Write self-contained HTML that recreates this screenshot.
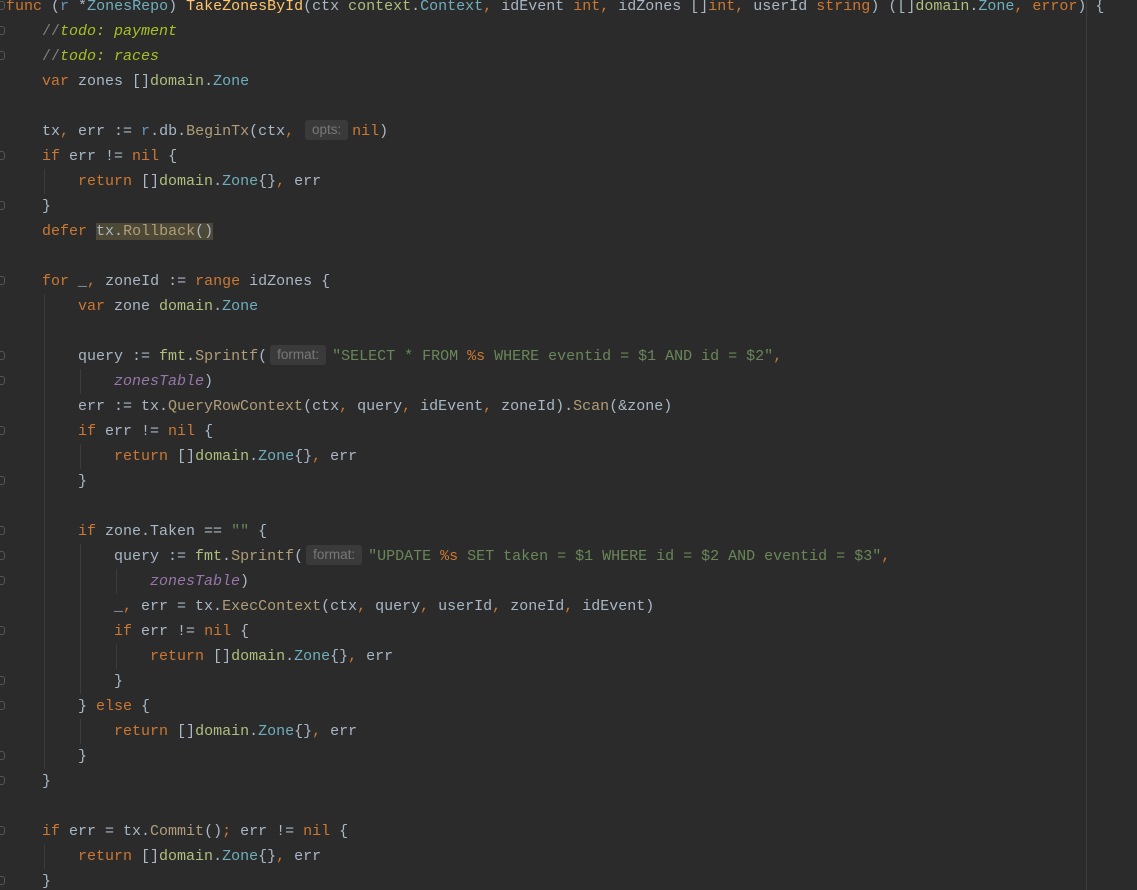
<!DOCTYPE html>
<html><head><meta charset="utf-8"><style>
html,body{margin:0;padding:0;background:#2b2b2b;width:1137px;height:890px;overflow:hidden;position:relative}
#code{position:absolute;left:6px;top:-6.5px;font-family:"Liberation Mono",monospace;font-size:15px;line-height:25px;color:#a9b7c6;white-space:pre}
.k{color:#cc7832}.f{color:#ffc66d}.m{color:#b09d79}.p{color:#afbf7e}.t{color:#6fafbd}.s{color:#6a8759}.c{color:#808080}
.td{color:#a8c023;font-style:italic}.v{color:#9876aa;font-style:italic}.r{color:#6897bb}
.h{display:inline-block;font-family:"Liberation Sans",sans-serif;font-size:13.5px;color:#787878;background:#3a3a3a;border-radius:3px;line-height:20px;text-align:center;vertical-align:1px}
.hl{background:#4d4936}
.g{position:absolute;width:1px;background:#3c3c3c}
.fi{position:absolute;left:0;width:4px;height:7px;border:1px solid #555;border-left:none;border-radius:0 3px 3px 0}
#edge{position:absolute;left:1086px;top:0;width:1px;height:890px;background:#3d3d3d}
</style></head><body>
<div id="edge"></div>
<div class="g" style="left:44px;top:169px;height:25px"></div>
<div class="g" style="left:44px;top:294px;height:475px"></div>
<div class="g" style="left:80px;top:369px;height:25px"></div>
<div class="g" style="left:80px;top:444px;height:25px"></div>
<div class="g" style="left:80px;top:544px;height:150px"></div>
<div class="g" style="left:80px;top:719px;height:25px"></div>
<div class="g" style="left:116px;top:569px;height:25px"></div>
<div class="g" style="left:116px;top:644px;height:25px"></div>
<div class="g" style="left:44px;top:844px;height:25px"></div>
<div class="fi" style="top:1px"></div><div class="fi" style="top:26px"></div><div class="fi" style="top:51px"></div>
<div class="fi" style="top:151px"></div><div class="fi" style="top:201px"></div><div class="fi" style="top:276px"></div>
<div class="fi" style="top:351px"></div><div class="fi" style="top:376px"></div><div class="fi" style="top:426px"></div>
<div class="fi" style="top:476px"></div><div class="fi" style="top:526px"></div><div class="fi" style="top:551px"></div>
<div class="fi" style="top:576px"></div><div class="fi" style="top:626px"></div><div class="fi" style="top:676px"></div>
<div class="fi" style="top:701px"></div><div class="fi" style="top:751px"></div><div class="fi" style="top:776px"></div>
<div class="fi" style="top:826px"></div><div class="fi" style="top:876px"></div>
<div id="code"><span class="k">func</span> (<span class="r">r</span> *<span class="t">ZonesRepo</span>) <span class="f">TakeZonesById</span>(ctx <span class="p">context</span>.<span class="t">Context</span><span class="k">,</span> idEvent <span class="k">int,</span> idZones []<span class="k">int,</span> userId <span class="k">string</span>) ([]<span class="p">domain</span>.<span class="t">Zone</span><span class="k">, error</span>) {
    <span class="c">//</span><span class="td">todo: payment</span>
    <span class="c">//</span><span class="td">todo: races</span>
    <span class="k">var</span> zones []<span class="p">domain</span>.<span class="t">Zone</span>

    tx<span class="k">,</span> err := <span class="r">r</span>.db.<span class="m">BeginTx</span>(ctx<span class="k">,</span> <span class="h" style="width:43px;margin:0 4px 0 2px">opts:</span><span class="k">nil</span>)
    <span class="k">if</span> err != <span class="k">nil</span> {
        <span class="k">return</span> []<span class="p">domain</span>.<span class="t">Zone</span>{}<span class="k">,</span> err
    }
    <span class="k">defer</span> <span class="hl">tx.<span class="m">Rollback</span>()</span>

    <span class="k">for</span> _<span class="k">,</span> zoneId := <span class="k">range</span> idZones {
        <span class="k">var</span> zone <span class="p">domain</span>.<span class="t">Zone</span>

        query := <span class="p">fmt</span>.<span class="m">Sprintf</span>(<span class="h" style="width:56px;margin:0 6px 0 3px">format:</span><span class="s">"SELECT * FROM <span class="k">%s</span> WHERE eventid = $1 AND id = $2"</span><span class="k">,</span>
            <span class="v">zonesTable</span>)
        err := tx.<span class="m">QueryRowContext</span>(ctx<span class="k">,</span> query<span class="k">,</span> idEvent<span class="k">,</span> zoneId).<span class="m">Scan</span>(&amp;zone)
        <span class="k">if</span> err != <span class="k">nil</span> {
            <span class="k">return</span> []<span class="p">domain</span>.<span class="t">Zone</span>{}<span class="k">,</span> err
        }

        <span class="k">if</span> zone.Taken == <span class="s">""</span> {
            query := <span class="p">fmt</span>.<span class="m">Sprintf</span>(<span class="h" style="width:56px;margin:0 6px 0 3px">format:</span><span class="s">"UPDATE <span class="k">%s</span> SET taken = $1 WHERE id = $2 AND eventid = $3"</span><span class="k">,</span>
                <span class="v">zonesTable</span>)
            _<span class="k">,</span> err = tx.<span class="m">ExecContext</span>(ctx<span class="k">,</span> query<span class="k">,</span> userId<span class="k">,</span> zoneId<span class="k">,</span> idEvent)
            <span class="k">if</span> err != <span class="k">nil</span> {
                <span class="k">return</span> []<span class="p">domain</span>.<span class="t">Zone</span>{}<span class="k">,</span> err
            }
        } <span class="k">else</span> {
            <span class="k">return</span> []<span class="p">domain</span>.<span class="t">Zone</span>{}<span class="k">,</span> err
        }
    }

    <span class="k">if</span> err = tx.<span class="m">Commit</span>()<span class="k">;</span> err != <span class="k">nil</span> {
        <span class="k">return</span> []<span class="p">domain</span>.<span class="t">Zone</span>{}<span class="k">,</span> err
    }
</div>
</body></html>
